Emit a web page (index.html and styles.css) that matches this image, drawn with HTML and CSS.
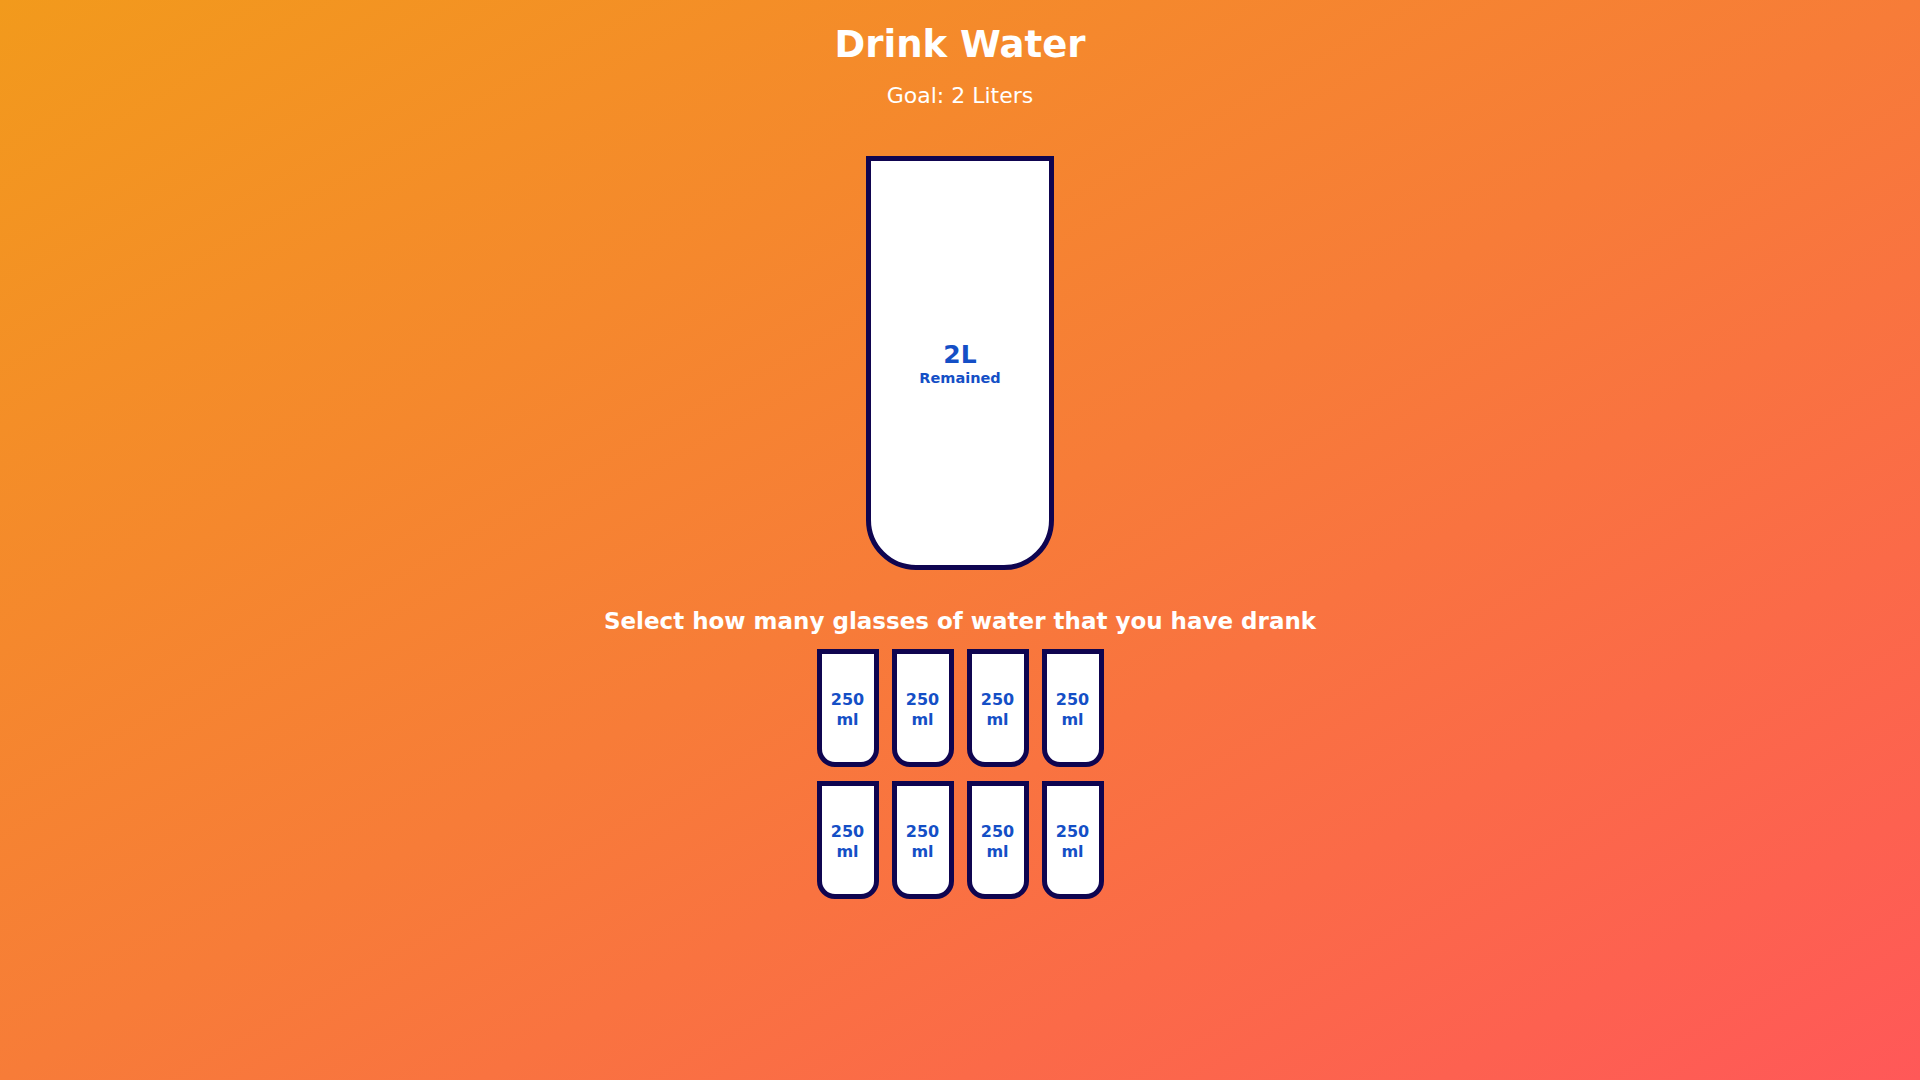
FILE: index.html
```html
<!DOCTYPE html>
<html lang="en">
<head>
<meta charset="UTF-8">
<title>Drink Water</title>
<link rel="stylesheet" href="styles.css">
</head>
<body>
  <h1 class="title">Drink Water</h1>
  <h3 class="goal">Goal: 2 Liters</h3>
  <div class="cup">
    <div class="remained">
      <span class="liters">2L</span>
      <small class="remained-label">Remained</small>
    </div>
  </div>
  <p class="text">Select how many glasses of water that you have drank</p>
  <div class="cups">
    <div class="cup-small">250<br>ml</div>
    <div class="cup-small">250<br>ml</div>
    <div class="cup-small">250<br>ml</div>
    <div class="cup-small">250<br>ml</div>
    <div class="cup-small">250<br>ml</div>
    <div class="cup-small">250<br>ml</div>
    <div class="cup-small">250<br>ml</div>
    <div class="cup-small">250<br>ml</div>
  </div>
</body>
</html>
```

FILE: styles.css
```css
* { box-sizing: border-box; }
html, body { height: 100%; }
body {
  margin: 0;
  background: linear-gradient(to bottom right, #f29a1c 0%, #f77c38 50%, #ff5858 100%);
  color: #fff;
  font-family: "DejaVu Sans", "Inter", sans-serif;
  display: flex;
  flex-direction: column;
  align-items: center;
}
.title {
  margin: 22px 0 0;
  font-size: 37px;
  line-height: 46px;
  font-weight: 700;
}
.goal {
  margin: 14px 0 0;
  font-size: 22px;
  line-height: 27px;
  font-weight: 400;
}
.cup {
  margin-top: 47px;
  width: 188px;
  height: 414px;
  background: #fff;
  border: 5px solid #0f0550;
  border-radius: 0 0 50px 50px;
  color: #144fc6;
  display: flex;
  flex-direction: column;
  overflow: hidden;
}
.remained {
  flex: 1;
  display: flex;
  flex-direction: column;
  align-items: center;
  justify-content: center;
  padding-top: 2px;
}
.liters {
  font-size: 25px;
  font-weight: 700;
  line-height: 28px;
}
.remained-label {
  font-size: 14.5px;
  font-weight: 700;
  line-height: 18px;
}
.text {
  margin: 37px 0 0;
  font-size: 23px;
  line-height: 28px;
  font-weight: 700;
  text-align: center;
}
.cups {
  margin-top: 14px;
  display: grid;
  grid-template-columns: repeat(4, 62px);
  column-gap: 13px;
  row-gap: 14px;
}
.cup-small {
  height: 118px;
  padding-top: 3px;
  background: #fff;
  border: 5px solid #0f0550;
  border-radius: 0 0 18px 18px;
  color: #144fc6;
  font-size: 16px;
  line-height: 20px;
  font-weight: 700;
  display: flex;
  align-items: center;
  justify-content: center;
  text-align: center;
}
```
